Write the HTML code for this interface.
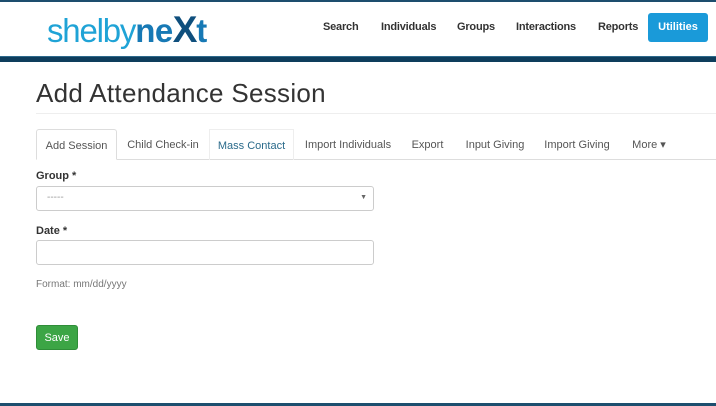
<!DOCTYPE html>
<html><head><meta charset="utf-8"><style>
*{box-sizing:border-box;margin:0;padding:0}
body{width:716px;height:406px;overflow:hidden;background:#fff;font-family:"Liberation Sans",sans-serif;position:relative}
.top{position:absolute;left:0;top:0;width:716px;height:2px;background:#1d4e6e}
.bar{position:absolute;left:0;top:56px;width:716px;height:6px;background:#0e3d5c;border-top:1px solid #2d6a8c}
.logo{position:absolute;left:47px;top:12px;font-size:33px;letter-spacing:-1.2px;color:#1fa3d6;line-height:36px}
.logo b{color:#1779b5;font-weight:bold;letter-spacing:-0.5px}
.logo i{font-style:normal;color:#0f4f7d;font-weight:bold;font-size:37px}
.nav{position:absolute;top:21px;font-size:11px;font-weight:bold;color:#333;letter-spacing:-.2px}
.util{position:absolute;left:648px;top:13px;width:60px;height:29px;background:#1a9ad9;border-radius:3px;color:#fff;font-size:11px;font-weight:bold;text-align:center;line-height:29px}
h1{position:absolute;left:36px;top:78px;font-size:26px;font-weight:normal;color:#333;letter-spacing:.3px}
.hr{position:absolute;left:36px;top:113px;width:680px;height:1px;background:#eee}
.tabs{position:absolute;left:36px;top:159px;width:680px;height:1px;background:#ddd}
.tab{position:absolute;top:129px;height:31px;font-size:11px;color:#555;line-height:33px;text-align:center}
.tab.act{border:1px solid #ddd;border-bottom:1px solid #fff;background:#fff;border-radius:3px 3px 0 0}
.tab.hov{border:1px solid #eee;border-bottom:none;color:#2a6a8a}
.lbl{position:absolute;left:36px;font-size:11px;font-weight:bold;color:#333}
.inp{position:absolute;left:36px;width:338px;height:25px;border:1px solid #ccc;border-radius:3px;background:#fff}
.fmt{position:absolute;left:36px;top:279px;font-size:10px;color:#777}
.save{position:absolute;left:36px;top:325px;width:42px;height:25px;background:#3ca545;border:1px solid #2f8d38;border-radius:3px;color:#fff;font-size:11px;text-align:center;line-height:25px}
.bot{position:absolute;left:0;top:403px;width:716px;height:3px;background:#1d4e6e}
</style></head><body>
<div class="top"></div>
<div class="logo">shelby<b>ne</b><i>X</i><b>t</b></div>
<div class="nav" style="left:323px">Search</div>
<div class="nav" style="left:381px">Individuals</div>
<div class="nav" style="left:457px">Groups</div>
<div class="nav" style="left:516px">Interactions</div>
<div class="nav" style="left:598px">Reports</div>
<div class="util">Utilities</div>
<div class="bar"></div>
<h1>Add Attendance Session</h1>
<div class="hr"></div>
<div class="tabs"></div>
<div class="tab act" style="left:36px;width:81px">Add Session</div>
<div class="tab" style="left:117px;width:92px">Child Check-in</div>
<div class="tab hov" style="left:209px;width:85px">Mass Contact</div>
<div class="tab" style="left:297px;width:102px">Import Individuals</div>
<div class="tab" style="left:405px;width:45px">Export</div>
<div class="tab" style="left:461px;width:68px">Input Giving</div>
<div class="tab" style="left:540px;width:74px">Import Giving</div>
<div class="tab" style="left:626px;width:46px">More ▾</div>
<div class="lbl" style="top:170px">Group *</div>
<div class="inp" style="top:186px"><span style="position:absolute;left:10px;top:5px;font-size:10px;color:#999">-----</span><span style="position:absolute;right:6px;top:7px;font-size:7px;color:#666">▼</span></div>
<div class="lbl" style="top:225px">Date *</div>
<div class="inp" style="top:240px"></div>
<div class="fmt">Format: mm/dd/yyyy</div>
<div class="save">Save</div>
<div class="bot"></div>
</body></html>
